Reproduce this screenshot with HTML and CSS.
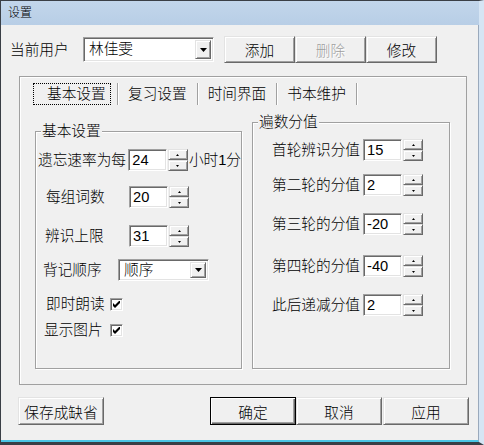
FILE: index.html
```html
<!DOCTYPE html>
<html>
<head>
<meta charset="utf-8">
<title>设置</title>
<link rel="stylesheet" href="styles.css">
</head>
<body>
<div class="window">
  <div class="titlebar">设置</div>
  <div class="client">
    <div class="user-row">
      <span class="user-label">当前用户</span>
      <div class="combo user-combo">
        <span class="combo-text">林佳雯</span>
        <span class="combo-btn"><svg width="7" height="4" viewBox="0 0 7 4"><path d="M0 0h7L3.5 4z" fill="#000"/></svg></span>
      </div>
      <div class="btn-group">
        <span class="btn btn-top">添加</span>
        <span class="btn btn-top disabled">删除</span>
        <span class="btn btn-top">修改</span>
      </div>
    </div>

    <div class="pane">
      <div class="tabs">
        <span class="tab-focus">基本设置</span>
        <span class="tab-sep first"></span>
        <span class="tab">复习设置</span>
        <span class="tab-sep"></span>
        <span class="tab">时间界面</span>
        <span class="tab-sep"></span>
        <span class="tab">书本维护</span>
        <span class="tab-sep"></span>
      </div>

      <div class="groups">
        <div class="group group-basic">
          <div class="group-title">基本设置</div>

          <div class="row row-b1">
            <span class="lbl">遗忘速率为每</span>
            <span class="edit">24</span>
            <span class="spin"><span class="spin-up"><svg width="3" height="2" viewBox="0 0 3 2"><path d="M0 2h3L1.5 0z" fill="#000"/></svg></span><span class="spin-down"><svg width="3" height="2" viewBox="0 0 3 2"><path d="M0 0h3L1.5 2z" fill="#000"/></svg></span></span>
            <span class="suffix">小时1分</span>
          </div>

          <div class="row row-b2">
            <span class="lbl ind8">每组词数</span>
            <span class="edit">20</span>
            <span class="spin"><span class="spin-up"><svg width="3" height="2" viewBox="0 0 3 2"><path d="M0 2h3L1.5 0z" fill="#000"/></svg></span><span class="spin-down"><svg width="3" height="2" viewBox="0 0 3 2"><path d="M0 0h3L1.5 2z" fill="#000"/></svg></span></span>
          </div>

          <div class="row row-b3">
            <span class="lbl ind7">辨识上限</span>
            <span class="edit">31</span>
            <span class="spin"><span class="spin-up"><svg width="3" height="2" viewBox="0 0 3 2"><path d="M0 2h3L1.5 0z" fill="#000"/></svg></span><span class="spin-down"><svg width="3" height="2" viewBox="0 0 3 2"><path d="M0 0h3L1.5 2z" fill="#000"/></svg></span></span>
          </div>

          <div class="row row-b4">
            <span class="lbl lbl-combo">背记顺序</span>
            <div class="combo order-combo">
              <span class="combo-text">顺序</span>
              <span class="combo-btn"><svg width="7" height="4" viewBox="0 0 7 4"><path d="M0 0h7L3.5 4z" fill="#000"/></svg></span>
            </div>
          </div>

          <div class="row check-row row-b5">
            <span class="lbl lbl-check ind8">即时朗读</span>
            <span class="checkbox"><svg width="7" height="7" viewBox="0 0 7 7"><path d="M0 2v3l2 2 5-5V-1L2 4z" fill="#000"/></svg></span>
          </div>

          <div class="row check-row row-b6">
            <span class="lbl lbl-check ind6">显示图片</span>
            <span class="checkbox"><svg width="7" height="7" viewBox="0 0 7 7"><path d="M0 2v3l2 2 5-5V-1L2 4z" fill="#000"/></svg></span>
          </div>
        </div>

        <div class="group group-score">
          <div class="group-title">遍数分值</div>

          <div class="row row-s1">
            <span class="lbl lbl-score">首轮辨识分值</span>
            <span class="edit">15</span>
            <span class="spin"><span class="spin-up"><svg width="3" height="2" viewBox="0 0 3 2"><path d="M0 2h3L1.5 0z" fill="#000"/></svg></span><span class="spin-down"><svg width="3" height="2" viewBox="0 0 3 2"><path d="M0 0h3L1.5 2z" fill="#000"/></svg></span></span>
          </div>
          <div class="row row-s2">
            <span class="lbl lbl-score">第二轮的分值</span>
            <span class="edit">2</span>
            <span class="spin"><span class="spin-up"><svg width="3" height="2" viewBox="0 0 3 2"><path d="M0 2h3L1.5 0z" fill="#000"/></svg></span><span class="spin-down"><svg width="3" height="2" viewBox="0 0 3 2"><path d="M0 0h3L1.5 2z" fill="#000"/></svg></span></span>
          </div>
          <div class="row row-s3">
            <span class="lbl lbl-score">第三轮的分值</span>
            <span class="edit">-20</span>
            <span class="spin"><span class="spin-up"><svg width="3" height="2" viewBox="0 0 3 2"><path d="M0 2h3L1.5 0z" fill="#000"/></svg></span><span class="spin-down"><svg width="3" height="2" viewBox="0 0 3 2"><path d="M0 0h3L1.5 2z" fill="#000"/></svg></span></span>
          </div>
          <div class="row row-s4">
            <span class="lbl lbl-score">第四轮的分值</span>
            <span class="edit">-40</span>
            <span class="spin"><span class="spin-up"><svg width="3" height="2" viewBox="0 0 3 2"><path d="M0 2h3L1.5 0z" fill="#000"/></svg></span><span class="spin-down"><svg width="3" height="2" viewBox="0 0 3 2"><path d="M0 0h3L1.5 2z" fill="#000"/></svg></span></span>
          </div>
          <div class="row row-s5">
            <span class="lbl lbl-score">此后递减分值</span>
            <span class="edit">2</span>
            <span class="spin"><span class="spin-up"><svg width="3" height="2" viewBox="0 0 3 2"><path d="M0 2h3L1.5 0z" fill="#000"/></svg></span><span class="spin-down"><svg width="3" height="2" viewBox="0 0 3 2"><path d="M0 0h3L1.5 2z" fill="#000"/></svg></span></span>
          </div>
        </div>
      </div>
    </div>

    <div class="footer">
      <span class="btn btn-bottom btn-save">保存成缺省</span>
      <span class="btn btn-bottom default btn-ok">确定</span>
      <span class="btn btn-bottom">取消</span>
      <span class="btn btn-bottom btn-apply">应用</span>
    </div>
  </div>
</div>
</body>
</html>
```

FILE: styles.css
```css
* { box-sizing: border-box; }

html, body {
  margin: 0;
  padding: 0;
}

body {
  width: 484px;
  height: 445px;
  overflow: hidden;
  background: #f0f0f0;
  font-family: "Liberation Sans", "Noto Sans CJK SC", sans-serif;
  font-size: 14.67px;
  font-weight: 300;
  color: #000;
}

.window {
  width: 484px;
  height: 445px;
  display: flex;
  flex-direction: column;
  border-left: 1px solid #3a3f46;
  border-top: 1px solid #3a3f46;
  border-right: 5px solid #d6e5f4;
  border-bottom: 3px solid #3a3f46;
  background: #f0f0f0;
}

.titlebar {
  height: 24px;
  padding-left: 7px;
  font-size: 12px;
  line-height: 24px;
  background: linear-gradient(#c2d6eb, #b8cee6);
  flex: none;
}

.client {
  flex: 1;
  background: #f0f0f0;
  border-right: 1px solid #9aa9bc;
  border-bottom: 2px solid #4ac6e6;
}

/* top row */
.user-row {
  display: flex;
  align-items: center;
  height: 27px;
  margin-top: 11px;
  padding-left: 9px;
}

.user-label {
  width: 73px;
  line-height: 20px;
}

.btn-group {
  display: flex;
  margin-left: 10px;
}

/* sunken / raised frames */
.combo, .edit, .checkbox {
  border: 1px solid;
  border-color: #a0a0a0 #fff #fff #a0a0a0;
  box-shadow: inset 1px 1px 0 #696969, inset -1px -1px 0 #e3e3e3;
  background: #fff;
}

.btn, .combo-btn, .spin-up, .spin-down {
  border: 1px solid;
  border-color: #e3e3e3 #696969 #696969 #e3e3e3;
  box-shadow: inset 1px 1px 0 #fff, inset -1px -1px 0 #a0a0a0;
  background: #f0f0f0;
}

.combo {
  display: flex;
  align-items: stretch;
  padding: 2px;
}

.combo-text {
  flex: 1;
  padding-left: 2px;
  line-height: 18px;
}

.combo-btn {
  width: 16px;
  display: flex;
  align-items: center;
  justify-content: center;
}

.user-combo {
  width: 131px;
  height: 25px;
}

.user-combo .combo-text {
  padding-left: 3px;
}

.btn {
  display: flex;
  align-items: center;
  justify-content: center;
}

.btn-top {
  width: 71px;
  height: 27px;
}

.btn.disabled {
  color: #a0a0a0;
  text-shadow: 1px 1px 0 #fff;
}

.btn.default {
  border-color: #000;
  box-shadow: inset 1px 1px 0 #fff, inset -1px -1px 0 #696969, inset -2px -2px 0 #a0a0a0;
}

/* tab pane */
.pane {
  width: 448px;
  height: 309px;
  margin: 13px 0 0 18px;
  border: 1px solid #a0a0a0;
  box-shadow: inset 1px 1px 0 #fff;
}

.tabs {
  display: flex;
  align-items: center;
  height: 22px;
  margin: 6px 0 0 13px;
}

.tab-focus {
  width: 78px;
  height: 22px;
  padding-left: 13px;
  line-height: 20px;
  border: 1px dotted #000;
}

.tab-sep {
  width: 2px;
  height: 22px;
  border-left: 1px solid #a0a0a0;
  border-right: 1px solid #fff;
}

.tab-sep.first {
  margin-left: 6px;
}

.tab {
  padding: 0 10px 0 9px;
  line-height: 20px;
}

.groups {
  display: flex;
  align-items: flex-end;
  margin: 17px 0 0 15px;
}

.group {
  border: 1px solid #a0a0a0;
  box-shadow: inset 1px 1px 0 #fff, 1px 1px 0 #fff;
}

.group-basic {
  width: 207px;
  height: 238px;
}

.group-score {
  width: 198px;
  height: 247px;
  margin-left: 10px;
}

.group-title {
  width: fit-content;
  margin: -9px 0 0 5px;
  padding: 0 1px;
  line-height: 16px;
  background: #f0f0f0;
}

/* rows */
.row {
  display: flex;
  align-items: center;
  height: 22px;
  padding-left: 2px;
}

.lbl {
  width: 91px;
  line-height: 18px;
  white-space: nowrap;
}

.ind8 { padding-left: 8px; }
.ind7 { padding-left: 7px; }
.ind6 { padding-left: 6px; }

.lbl-combo {
  width: 80px;
  padding-left: 5px;
}

.lbl-check {
  width: 72px;
}

.lbl-score {
  padding-left: 17px;
  width: 108px;
}

.edit {
  width: 39px;
  height: 22px;
  padding: 0 0 0 3px;
  line-height: 20px;
}

.spin {
  display: flex;
  flex-direction: column;
  width: 20px;
  height: 22px;
  margin-left: 1px;
}

.spin-up, .spin-down {
  flex: 1;
  display: flex;
  align-items: center;
  justify-content: center;
}

.spin svg { display: block; }

.suffix {
  margin-left: 1px;
  white-space: nowrap;
  line-height: 18px;
}

.order-combo {
  width: 91px;
  height: 22px;
  padding: 2px;
}

.order-combo .combo-text {
  line-height: 16px;
  padding-left: 3px;
}

.check-row {
  height: 16px;
}

.checkbox {
  width: 13px;
  height: 13px;
  display: flex;
  align-items: center;
  justify-content: center;
}

.row-b1 { margin-top: 10px; }
.row-b2 { margin-top: 15px; }
.row-b3 { margin-top: 17px; }
.row-b4 { margin-top: 12px; }
.row-b5 { margin-top: 15px; }
.row-b6 { margin-top: 10px; }

.row-s1 { margin-top: 9px; }
.row-s2 { margin-top: 13px; }
.row-s3 { margin-top: 17px; }
.row-s4 { margin-top: 20px; }
.row-s5 { margin-top: 17px; }

/* footer */
.footer {
  display: flex;
  margin: 12px 0 0 17px;
}

.btn-bottom {
  width: 86px;
  height: 28px;
}

.btn-ok {
  margin-left: 106px;
}

.btn-apply {
  margin-left: 1px;
}
```
